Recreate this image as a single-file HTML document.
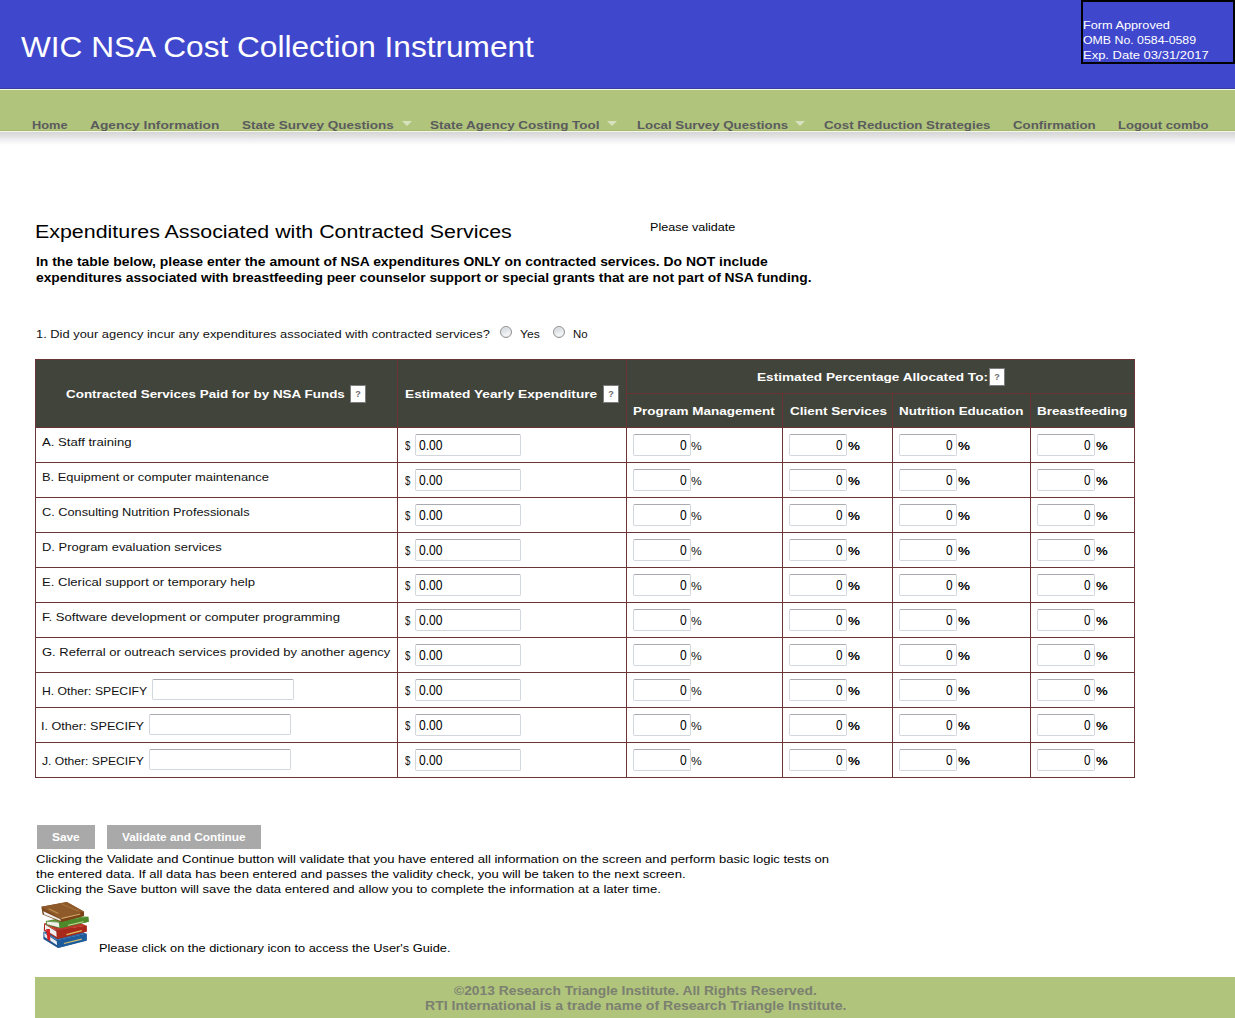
<!DOCTYPE html>
<html><head><meta charset="utf-8"><title>WIC NSA Cost Collection Instrument</title>
<style>
html,body{margin:0;padding:0;background:#fff;}
body{width:1235px;height:1018px;position:relative;overflow:hidden;font-family:"Liberation Sans",sans-serif;}
.t{position:absolute;white-space:nowrap;line-height:1;transform-origin:0 0;}
.inp{position:absolute;box-sizing:border-box;border:1px solid #d2d6dd;border-top-color:#a9abb1;border-radius:2px;background:#fff;}
</style></head><body>
<div style="position:absolute;left:0px;top:0px;width:1235px;height:88px;background:#3f48cc;"></div><div style="position:absolute;left:0px;top:88px;width:1235px;height:1px;background:#3b3e98;"></div><div style="position:absolute;left:0px;top:89px;width:1235px;height:1px;background:#f3f5f0;"></div><div style="position:absolute;left:0px;top:90px;width:1235px;height:40px;background:#b0c47c;"></div><div style="position:absolute;left:0px;top:130px;width:1235px;height:1px;background:#a6b872;"></div><div style="position:absolute;left:0px;top:131px;width:1235px;height:1px;background:#f4f8e4;"></div><div style="position:absolute;left:0px;top:132px;width:1235px;height:13px;background:linear-gradient(#d5d5d9,#e3e3e2 35%,#f1f1f4 65%,#ffffff);"></div><div style="position:absolute;left:1081px;top:0;width:154px;height:64px;box-sizing:border-box;border:2px solid #000"></div><div style="position:absolute;left:402px;top:121px;width:0;height:0;border-left:5px solid transparent;border-right:5px solid transparent;border-top:5px solid #d8e1bd"></div><div style="position:absolute;left:607px;top:121px;width:0;height:0;border-left:5px solid transparent;border-right:5px solid transparent;border-top:5px solid #d8e1bd"></div><div style="position:absolute;left:795px;top:121px;width:0;height:0;border-left:5px solid transparent;border-right:5px solid transparent;border-top:5px solid #d8e1bd"></div><div style="position:absolute;left:35px;top:359px;width:1099px;height:68px;background:#41443b;"></div><div style="position:absolute;left:35px;top:359px;width:1100px;height:1px;background:#6b3434;"></div><div style="position:absolute;left:35px;top:427px;width:1100px;height:1px;background:#6b3434;"></div><div style="position:absolute;left:35px;top:462px;width:1100px;height:1px;background:#6b3434;"></div><div style="position:absolute;left:35px;top:497px;width:1100px;height:1px;background:#6b3434;"></div><div style="position:absolute;left:35px;top:532px;width:1100px;height:1px;background:#6b3434;"></div><div style="position:absolute;left:35px;top:567px;width:1100px;height:1px;background:#6b3434;"></div><div style="position:absolute;left:35px;top:602px;width:1100px;height:1px;background:#6b3434;"></div><div style="position:absolute;left:35px;top:637px;width:1100px;height:1px;background:#6b3434;"></div><div style="position:absolute;left:35px;top:672px;width:1100px;height:1px;background:#6b3434;"></div><div style="position:absolute;left:35px;top:707px;width:1100px;height:1px;background:#6b3434;"></div><div style="position:absolute;left:35px;top:742px;width:1100px;height:1px;background:#6b3434;"></div><div style="position:absolute;left:35px;top:777px;width:1100px;height:1px;background:#6b3434;"></div><div style="position:absolute;left:626px;top:393px;width:508px;height:1px;background:#6b3434;"></div><div style="position:absolute;left:35px;top:359px;width:1px;height:419px;background:#6b3434;"></div><div style="position:absolute;left:397px;top:359px;width:1px;height:419px;background:#6b3434;"></div><div style="position:absolute;left:626px;top:359px;width:1px;height:419px;background:#6b3434;"></div><div style="position:absolute;left:1134px;top:359px;width:1px;height:419px;background:#6b3434;"></div><div style="position:absolute;left:782px;top:393px;width:1px;height:385px;background:#6b3434;"></div><div style="position:absolute;left:892px;top:393px;width:1px;height:385px;background:#6b3434;"></div><div style="position:absolute;left:1030px;top:393px;width:1px;height:385px;background:#6b3434;"></div><div style="position:absolute;left:350px;top:385px;width:16px;height:18px;box-sizing:border-box;background:#fff;border:1px solid #7c7c7c;font:bold 9px 'Liberation Sans',sans-serif;color:#6a6a6a;text-align:center;line-height:16px">?</div><div style="position:absolute;left:603px;top:385px;width:16px;height:18px;box-sizing:border-box;background:#fff;border:1px solid #7c7c7c;font:bold 9px 'Liberation Sans',sans-serif;color:#6a6a6a;text-align:center;line-height:16px">?</div><div style="position:absolute;left:989px;top:368px;width:16px;height:18px;box-sizing:border-box;background:#fff;border:1px solid #7c7c7c;font:bold 9px 'Liberation Sans',sans-serif;color:#6a6a6a;text-align:center;line-height:16px">?</div><div class="inp" style="left:415px;top:434px;width:106px;height:22px"></div><div class="inp" style="left:633px;top:434px;width:58px;height:22px"></div><div class="inp" style="left:789px;top:434px;width:58px;height:22px"></div><div class="inp" style="left:899px;top:434px;width:58px;height:22px"></div><div class="inp" style="left:1037px;top:434px;width:58px;height:22px"></div><div class="inp" style="left:415px;top:469px;width:106px;height:22px"></div><div class="inp" style="left:633px;top:469px;width:58px;height:22px"></div><div class="inp" style="left:789px;top:469px;width:58px;height:22px"></div><div class="inp" style="left:899px;top:469px;width:58px;height:22px"></div><div class="inp" style="left:1037px;top:469px;width:58px;height:22px"></div><div class="inp" style="left:415px;top:504px;width:106px;height:22px"></div><div class="inp" style="left:633px;top:504px;width:58px;height:22px"></div><div class="inp" style="left:789px;top:504px;width:58px;height:22px"></div><div class="inp" style="left:899px;top:504px;width:58px;height:22px"></div><div class="inp" style="left:1037px;top:504px;width:58px;height:22px"></div><div class="inp" style="left:415px;top:539px;width:106px;height:22px"></div><div class="inp" style="left:633px;top:539px;width:58px;height:22px"></div><div class="inp" style="left:789px;top:539px;width:58px;height:22px"></div><div class="inp" style="left:899px;top:539px;width:58px;height:22px"></div><div class="inp" style="left:1037px;top:539px;width:58px;height:22px"></div><div class="inp" style="left:415px;top:574px;width:106px;height:22px"></div><div class="inp" style="left:633px;top:574px;width:58px;height:22px"></div><div class="inp" style="left:789px;top:574px;width:58px;height:22px"></div><div class="inp" style="left:899px;top:574px;width:58px;height:22px"></div><div class="inp" style="left:1037px;top:574px;width:58px;height:22px"></div><div class="inp" style="left:415px;top:609px;width:106px;height:22px"></div><div class="inp" style="left:633px;top:609px;width:58px;height:22px"></div><div class="inp" style="left:789px;top:609px;width:58px;height:22px"></div><div class="inp" style="left:899px;top:609px;width:58px;height:22px"></div><div class="inp" style="left:1037px;top:609px;width:58px;height:22px"></div><div class="inp" style="left:415px;top:644px;width:106px;height:22px"></div><div class="inp" style="left:633px;top:644px;width:58px;height:22px"></div><div class="inp" style="left:789px;top:644px;width:58px;height:22px"></div><div class="inp" style="left:899px;top:644px;width:58px;height:22px"></div><div class="inp" style="left:1037px;top:644px;width:58px;height:22px"></div><div class="inp" style="left:415px;top:679px;width:106px;height:22px"></div><div class="inp" style="left:633px;top:679px;width:58px;height:22px"></div><div class="inp" style="left:789px;top:679px;width:58px;height:22px"></div><div class="inp" style="left:899px;top:679px;width:58px;height:22px"></div><div class="inp" style="left:1037px;top:679px;width:58px;height:22px"></div><div class="inp" style="left:152px;top:679px;width:142px;height:21px"></div><div class="inp" style="left:415px;top:714px;width:106px;height:22px"></div><div class="inp" style="left:633px;top:714px;width:58px;height:22px"></div><div class="inp" style="left:789px;top:714px;width:58px;height:22px"></div><div class="inp" style="left:899px;top:714px;width:58px;height:22px"></div><div class="inp" style="left:1037px;top:714px;width:58px;height:22px"></div><div class="inp" style="left:149px;top:714px;width:142px;height:21px"></div><div class="inp" style="left:415px;top:749px;width:106px;height:22px"></div><div class="inp" style="left:633px;top:749px;width:58px;height:22px"></div><div class="inp" style="left:789px;top:749px;width:58px;height:22px"></div><div class="inp" style="left:899px;top:749px;width:58px;height:22px"></div><div class="inp" style="left:1037px;top:749px;width:58px;height:22px"></div><div class="inp" style="left:149px;top:749px;width:142px;height:21px"></div><div style="position:absolute;left:500px;top:326px;width:12px;height:12px;box-sizing:border-box;border-radius:50%;border:1px solid #8f8f8f;box-shadow:inset 0 0 0 1px #e9e9e9;background:linear-gradient(160deg,#c9d0d8,#f4f6f8 75%)"></div><div style="position:absolute;left:553px;top:326px;width:12px;height:12px;box-sizing:border-box;border-radius:50%;border:1px solid #8f8f8f;box-shadow:inset 0 0 0 1px #e9e9e9;background:linear-gradient(160deg,#c9d0d8,#f4f6f8 75%)"></div><div style="position:absolute;left:37px;top:825px;width:58px;height:24px;background:#a9a9a9;"></div><div style="position:absolute;left:107px;top:825px;width:154px;height:24px;background:#a9a9a9;"></div><div style="position:absolute;left:35px;top:977px;width:1200px;height:41px;background:#b0c47c;"></div>
<svg style="position:absolute;left:30px;top:895px" width="100" height="65" viewBox="0 0 1235 803">
<g stroke="none">
<!-- blue bottom book -->
<polygon points="165,455 335,560 700,480 700,560 345,655 165,545" fill="#1f5590"/>
<polygon points="165,455 520,400 700,480 335,560" fill="#2c66a4"/>
<polygon points="175,470 330,570 335,620 180,520" fill="#e8eef4"/>
<polygon points="335,560 700,480 700,565 345,655" fill="#1f5c9c"/>
<polyline points="420,600 640,545" stroke="#d8c070" stroke-width="14" fill="none"/>
<!-- red book -->
<polygon points="175,350 330,440 700,380 700,450 340,545 170,440" fill="#a82a1e"/>
<polygon points="175,350 520,300 700,380 330,440" fill="#b8382a"/>
<polygon points="185,365 325,450 330,520 185,430" fill="#eeeeee"/>
<polygon points="330,440 700,380 700,450 340,545" fill="#a8281a"/>
<polyline points="450,490 640,440" stroke="#e0c060" stroke-width="14" fill="none"/>
<polygon points="200,420 245,420 250,570 215,550" fill="#d42020"/>
<!-- green book -->
<polygon points="195,320 360,330 720,270 725,330 370,410 200,370" fill="#4a7f2a"/>
<polygon points="195,320 520,255 720,270 360,330" fill="#5b9033"/>
<polygon points="205,330 355,340 365,400 210,360" fill="#f0f0ea"/>
<polygon points="360,330 720,270 725,330 370,410" fill="#4d8a2c"/>
<polyline points="470,375 660,330" stroke="#cfe0a0" stroke-width="12" fill="none"/>
<!-- brown top book -->
<polygon points="140,145 455,88 665,205 668,255 385,335 155,240" fill="#7e4a1c"/>
<polygon points="140,145 455,88 665,205 380,300" fill="#8e5a2a"/>
<polygon points="165,200 375,300 380,320 175,240" fill="#eef0f2"/>
<polygon points="380,300 665,205 668,255 385,335" fill="#7a4216"/>
<polyline points="230,170 350,230" stroke="#c09050" stroke-width="14" fill="none"/>
<polyline points="390,110 600,200" stroke="#b07a40" stroke-width="10" fill="none"/>
<polyline points="390,290 620,235" stroke="#d8b070" stroke-width="14" fill="none"/>
</g>
</svg>

<div class="t" style="left:21.00px;top:32px;font-size:29.6px;color:#fff;transform:scaleX(1.0680);">WIC NSA Cost Collection Instrument</div><div class="t" style="left:1083.40px;top:19px;font-size:11.6px;color:#fff;transform:scaleX(1.0963);">Form Approved</div><div class="t" style="left:1083.40px;top:34px;font-size:11.6px;color:#fff;transform:scaleX(1.0634);">OMB No. 0584-0589</div><div class="t" style="left:1083.40px;top:49px;font-size:11.6px;color:#fff;transform:scaleX(1.1199);">Exp. Date 03/31/2017</div><div class="t" style="left:31.60px;top:119px;font-size:11.6px;color:#5b5b5e;font-weight:bold;transform:scaleX(1.1049);">Home</div><div class="t" style="left:90.40px;top:119px;font-size:11.6px;color:#5b5b5e;font-weight:bold;transform:scaleX(1.1877);">Agency Information</div><div class="t" style="left:242.30px;top:119px;font-size:11.6px;color:#5b5b5e;font-weight:bold;transform:scaleX(1.1665);">State Survey Questions</div><div class="t" style="left:430.20px;top:119px;font-size:11.6px;color:#5b5b5e;font-weight:bold;transform:scaleX(1.1589);">State Agency Costing Tool</div><div class="t" style="left:636.70px;top:119px;font-size:11.6px;color:#5b5b5e;font-weight:bold;transform:scaleX(1.1441);">Local Survey Questions</div><div class="t" style="left:823.70px;top:119px;font-size:11.6px;color:#5b5b5e;font-weight:bold;transform:scaleX(1.1488);">Cost Reduction Strategies</div><div class="t" style="left:1012.70px;top:119px;font-size:11.6px;color:#5b5b5e;font-weight:bold;transform:scaleX(1.1464);">Confirmation</div><div class="t" style="left:1118.40px;top:119px;font-size:11.6px;color:#5b5b5e;font-weight:bold;transform:scaleX(1.1230);">Logout combo</div><div class="t" style="left:34.83px;top:223px;font-size:18.3px;color:#000;transform:scaleX(1.1700);">Expenditures Associated with Contracted Services</div><div class="t" style="left:649.80px;top:221px;font-size:11.6px;color:#000;transform:scaleX(1.0833);">Please validate</div><div class="t" style="left:35.50px;top:255px;font-size:13.1px;color:#000;font-weight:bold;transform:scaleX(1.0612);">In the table below, please enter the amount of NSA expenditures ONLY on contracted services. Do NOT include</div><div class="t" style="left:35.50px;top:271px;font-size:13.1px;color:#000;font-weight:bold;transform:scaleX(1.0539);">expenditures associated with breastfeeding peer counselor support or special grants that are not part of NSA funding.</div><div class="t" style="left:36.00px;top:328px;font-size:11.6px;color:#111;transform:scaleX(1.1107);">1. Did your agency incur any expenditures associated with contracted services?</div><div class="t" style="left:519.80px;top:328px;font-size:11.6px;color:#111;transform:scaleX(1.0462);">Yes</div><div class="t" style="left:573.30px;top:328px;font-size:11.6px;color:#111;transform:scaleX(0.9880);">No</div><div class="t" style="left:66.20px;top:388px;font-size:11.6px;color:#fff;font-weight:bold;transform:scaleX(1.1592);">Contracted Services Paid for by NSA Funds</div><div class="t" style="left:404.50px;top:388px;font-size:11.6px;color:#fff;font-weight:bold;transform:scaleX(1.1805);">Estimated Yearly Expenditure</div><div class="t" style="left:757.00px;top:371px;font-size:11.6px;color:#fff;font-weight:bold;transform:scaleX(1.1756);">Estimated Percentage Allocated To:</div><div class="t" style="left:633.20px;top:405px;font-size:11.6px;color:#fff;font-weight:bold;transform:scaleX(1.1632);">Program Management</div><div class="t" style="left:789.50px;top:405px;font-size:11.6px;color:#fff;font-weight:bold;transform:scaleX(1.1659);">Client Services</div><div class="t" style="left:899.40px;top:405px;font-size:11.6px;color:#fff;font-weight:bold;transform:scaleX(1.1575);">Nutrition Education</div><div class="t" style="left:1037.20px;top:405px;font-size:11.6px;color:#fff;font-weight:bold;transform:scaleX(1.1692);">Breastfeeding</div><div class="t" style="left:42.00px;top:436px;font-size:11.6px;color:#111;transform:scaleX(1.1322);">A. Staff training</div><div class="t" style="left:42.00px;top:471px;font-size:11.6px;color:#111;transform:scaleX(1.1102);">B. Equipment or computer maintenance</div><div class="t" style="left:42.00px;top:506px;font-size:11.6px;color:#111;transform:scaleX(1.0994);">C. Consulting Nutrition Professionals</div><div class="t" style="left:42.00px;top:541px;font-size:11.6px;color:#111;transform:scaleX(1.1154);">D. Program evaluation services</div><div class="t" style="left:42.00px;top:576px;font-size:11.6px;color:#111;transform:scaleX(1.1282);">E. Clerical support or temporary help</div><div class="t" style="left:42.00px;top:611px;font-size:11.6px;color:#111;transform:scaleX(1.1276);">F. Software development or computer programming</div><div class="t" style="left:42.00px;top:646px;font-size:11.6px;color:#111;transform:scaleX(1.1212);">G. Referral or outreach services provided by another agency</div><div class="t" style="left:42.00px;top:685px;font-size:11.6px;color:#111;transform:scaleX(1.0527);">H. Other: SPECIFY</div><div class="t" style="left:40.91px;top:720px;font-size:11.6px;color:#111;transform:scaleX(1.0878);">I. Other: SPECIFY</div><div class="t" style="left:42.00px;top:755px;font-size:11.6px;color:#111;transform:scaleX(1.0456);">J. Other: SPECIFY</div><div class="t" style="left:51.90px;top:832px;font-size:10.8px;color:#fff;font-weight:bold;transform:scaleX(1.0987);">Save</div><div class="t" style="left:122.10px;top:832px;font-size:10.8px;color:#fff;font-weight:bold;transform:scaleX(1.0951);">Validate and Continue</div><div class="t" style="left:35.70px;top:853px;font-size:11.6px;color:#000;transform:scaleX(1.1242);">Clicking the Validate and Continue button will validate that you have entered all information on the screen and perform basic logic tests on</div><div class="t" style="left:35.70px;top:868px;font-size:11.6px;color:#000;transform:scaleX(1.1273);">the entered data. If all data has been entered and passes the validity check, you will be taken to the next screen.</div><div class="t" style="left:35.70px;top:883px;font-size:11.6px;color:#000;transform:scaleX(1.1287);">Clicking the Save button will save the data entered and allow you to complete the information at a later time.</div><div class="t" style="left:99.10px;top:942px;font-size:11.6px;color:#000;transform:scaleX(1.1030);">Please click on the dictionary icon to access the User's Guide.</div><div class="t" style="left:454.00px;top:985px;font-size:12.5px;color:#7b8070;font-weight:bold;transform:scaleX(1.1048);">©2013 Research Triangle Institute. All Rights Reserved.</div><div class="t" style="left:424.90px;top:1000px;font-size:12.5px;color:#7b8070;font-weight:bold;transform:scaleX(1.1235);">RTI International is a trade name of Research Triangle Institute.</div><div class="t" style="left:404.70px;top:440px;font-size:12.5px;color:#111;transform:scaleX(0.7714);">$</div><div class="t" style="left:404.70px;top:475px;font-size:12.5px;color:#111;transform:scaleX(0.7714);">$</div><div class="t" style="left:404.70px;top:510px;font-size:12.5px;color:#111;transform:scaleX(0.7714);">$</div><div class="t" style="left:404.70px;top:545px;font-size:12.5px;color:#111;transform:scaleX(0.7714);">$</div><div class="t" style="left:404.70px;top:580px;font-size:12.5px;color:#111;transform:scaleX(0.7714);">$</div><div class="t" style="left:404.70px;top:615px;font-size:12.5px;color:#111;transform:scaleX(0.7714);">$</div><div class="t" style="left:404.70px;top:650px;font-size:12.5px;color:#111;transform:scaleX(0.7714);">$</div><div class="t" style="left:404.70px;top:685px;font-size:12.5px;color:#111;transform:scaleX(0.7714);">$</div><div class="t" style="left:404.70px;top:720px;font-size:12.5px;color:#111;transform:scaleX(0.7714);">$</div><div class="t" style="left:404.70px;top:755px;font-size:12.5px;color:#111;transform:scaleX(0.7714);">$</div><div class="t" style="left:419.20px;top:438px;font-size:14px;color:#000;transform:scaleX(0.8630);">0.00</div><div class="t" style="left:419.20px;top:473px;font-size:14px;color:#000;transform:scaleX(0.8630);">0.00</div><div class="t" style="left:419.20px;top:508px;font-size:14px;color:#000;transform:scaleX(0.8630);">0.00</div><div class="t" style="left:419.20px;top:543px;font-size:14px;color:#000;transform:scaleX(0.8630);">0.00</div><div class="t" style="left:419.20px;top:578px;font-size:14px;color:#000;transform:scaleX(0.8630);">0.00</div><div class="t" style="left:419.20px;top:613px;font-size:14px;color:#000;transform:scaleX(0.8630);">0.00</div><div class="t" style="left:419.20px;top:648px;font-size:14px;color:#000;transform:scaleX(0.8630);">0.00</div><div class="t" style="left:419.20px;top:683px;font-size:14px;color:#000;transform:scaleX(0.8630);">0.00</div><div class="t" style="left:419.20px;top:718px;font-size:14px;color:#000;transform:scaleX(0.8630);">0.00</div><div class="t" style="left:419.20px;top:753px;font-size:14px;color:#000;transform:scaleX(0.8630);">0.00</div><div class="t" style="left:679.90px;top:438px;font-size:14px;color:#000;transform:scaleX(0.8625);">0</div><div class="t" style="left:679.90px;top:473px;font-size:14px;color:#000;transform:scaleX(0.8625);">0</div><div class="t" style="left:679.90px;top:508px;font-size:14px;color:#000;transform:scaleX(0.8625);">0</div><div class="t" style="left:679.90px;top:543px;font-size:14px;color:#000;transform:scaleX(0.8625);">0</div><div class="t" style="left:679.90px;top:578px;font-size:14px;color:#000;transform:scaleX(0.8625);">0</div><div class="t" style="left:679.90px;top:613px;font-size:14px;color:#000;transform:scaleX(0.8625);">0</div><div class="t" style="left:679.90px;top:648px;font-size:14px;color:#000;transform:scaleX(0.8625);">0</div><div class="t" style="left:679.90px;top:683px;font-size:14px;color:#000;transform:scaleX(0.8625);">0</div><div class="t" style="left:679.90px;top:718px;font-size:14px;color:#000;transform:scaleX(0.8625);">0</div><div class="t" style="left:679.90px;top:753px;font-size:14px;color:#000;transform:scaleX(0.8625);">0</div><div class="t" style="left:836.30px;top:438px;font-size:14px;color:#000;transform:scaleX(0.8375);">0</div><div class="t" style="left:836.30px;top:473px;font-size:14px;color:#000;transform:scaleX(0.8375);">0</div><div class="t" style="left:836.30px;top:508px;font-size:14px;color:#000;transform:scaleX(0.8375);">0</div><div class="t" style="left:836.30px;top:543px;font-size:14px;color:#000;transform:scaleX(0.8375);">0</div><div class="t" style="left:836.30px;top:578px;font-size:14px;color:#000;transform:scaleX(0.8375);">0</div><div class="t" style="left:836.30px;top:613px;font-size:14px;color:#000;transform:scaleX(0.8375);">0</div><div class="t" style="left:836.30px;top:648px;font-size:14px;color:#000;transform:scaleX(0.8375);">0</div><div class="t" style="left:836.30px;top:683px;font-size:14px;color:#000;transform:scaleX(0.8375);">0</div><div class="t" style="left:836.30px;top:718px;font-size:14px;color:#000;transform:scaleX(0.8375);">0</div><div class="t" style="left:836.30px;top:753px;font-size:14px;color:#000;transform:scaleX(0.8375);">0</div><div class="t" style="left:946.00px;top:438px;font-size:14px;color:#000;transform:scaleX(0.8500);">0</div><div class="t" style="left:946.00px;top:473px;font-size:14px;color:#000;transform:scaleX(0.8500);">0</div><div class="t" style="left:946.00px;top:508px;font-size:14px;color:#000;transform:scaleX(0.8500);">0</div><div class="t" style="left:946.00px;top:543px;font-size:14px;color:#000;transform:scaleX(0.8500);">0</div><div class="t" style="left:946.00px;top:578px;font-size:14px;color:#000;transform:scaleX(0.8500);">0</div><div class="t" style="left:946.00px;top:613px;font-size:14px;color:#000;transform:scaleX(0.8500);">0</div><div class="t" style="left:946.00px;top:648px;font-size:14px;color:#000;transform:scaleX(0.8500);">0</div><div class="t" style="left:946.00px;top:683px;font-size:14px;color:#000;transform:scaleX(0.8500);">0</div><div class="t" style="left:946.00px;top:718px;font-size:14px;color:#000;transform:scaleX(0.8500);">0</div><div class="t" style="left:946.00px;top:753px;font-size:14px;color:#000;transform:scaleX(0.8500);">0</div><div class="t" style="left:1084.00px;top:438px;font-size:14px;color:#000;transform:scaleX(0.8375);">0</div><div class="t" style="left:1084.00px;top:473px;font-size:14px;color:#000;transform:scaleX(0.8375);">0</div><div class="t" style="left:1084.00px;top:508px;font-size:14px;color:#000;transform:scaleX(0.8375);">0</div><div class="t" style="left:1084.00px;top:543px;font-size:14px;color:#000;transform:scaleX(0.8375);">0</div><div class="t" style="left:1084.00px;top:578px;font-size:14px;color:#000;transform:scaleX(0.8375);">0</div><div class="t" style="left:1084.00px;top:613px;font-size:14px;color:#000;transform:scaleX(0.8375);">0</div><div class="t" style="left:1084.00px;top:648px;font-size:14px;color:#000;transform:scaleX(0.8375);">0</div><div class="t" style="left:1084.00px;top:683px;font-size:14px;color:#000;transform:scaleX(0.8375);">0</div><div class="t" style="left:1084.00px;top:718px;font-size:14px;color:#000;transform:scaleX(0.8375);">0</div><div class="t" style="left:1084.00px;top:753px;font-size:14px;color:#000;transform:scaleX(0.8375);">0</div><div class="t" style="left:691.20px;top:441px;font-size:11.8px;color:#111;transform:scaleX(1.0182);">%</div><div class="t" style="left:691.20px;top:476px;font-size:11.8px;color:#111;transform:scaleX(1.0182);">%</div><div class="t" style="left:691.20px;top:511px;font-size:11.8px;color:#111;transform:scaleX(1.0182);">%</div><div class="t" style="left:691.20px;top:546px;font-size:11.8px;color:#111;transform:scaleX(1.0182);">%</div><div class="t" style="left:691.20px;top:581px;font-size:11.8px;color:#111;transform:scaleX(1.0182);">%</div><div class="t" style="left:691.20px;top:616px;font-size:11.8px;color:#111;transform:scaleX(1.0182);">%</div><div class="t" style="left:691.20px;top:651px;font-size:11.8px;color:#111;transform:scaleX(1.0182);">%</div><div class="t" style="left:691.20px;top:686px;font-size:11.8px;color:#111;transform:scaleX(1.0182);">%</div><div class="t" style="left:691.20px;top:721px;font-size:11.8px;color:#111;transform:scaleX(1.0182);">%</div><div class="t" style="left:691.20px;top:756px;font-size:11.8px;color:#111;transform:scaleX(1.0182);">%</div><div class="t" style="left:847.80px;top:441px;font-size:11.8px;color:#000;font-weight:bold;transform:scaleX(1.1455);">%</div><div class="t" style="left:847.80px;top:476px;font-size:11.8px;color:#000;font-weight:bold;transform:scaleX(1.1455);">%</div><div class="t" style="left:847.80px;top:511px;font-size:11.8px;color:#000;font-weight:bold;transform:scaleX(1.1455);">%</div><div class="t" style="left:847.80px;top:546px;font-size:11.8px;color:#000;font-weight:bold;transform:scaleX(1.1455);">%</div><div class="t" style="left:847.80px;top:581px;font-size:11.8px;color:#000;font-weight:bold;transform:scaleX(1.1455);">%</div><div class="t" style="left:847.80px;top:616px;font-size:11.8px;color:#000;font-weight:bold;transform:scaleX(1.1455);">%</div><div class="t" style="left:847.80px;top:651px;font-size:11.8px;color:#000;font-weight:bold;transform:scaleX(1.1455);">%</div><div class="t" style="left:847.80px;top:686px;font-size:11.8px;color:#000;font-weight:bold;transform:scaleX(1.1455);">%</div><div class="t" style="left:847.80px;top:721px;font-size:11.8px;color:#000;font-weight:bold;transform:scaleX(1.1455);">%</div><div class="t" style="left:847.80px;top:756px;font-size:11.8px;color:#000;font-weight:bold;transform:scaleX(1.1455);">%</div><div class="t" style="left:957.70px;top:441px;font-size:11.8px;color:#000;font-weight:bold;transform:scaleX(1.1455);">%</div><div class="t" style="left:957.70px;top:476px;font-size:11.8px;color:#000;font-weight:bold;transform:scaleX(1.1455);">%</div><div class="t" style="left:957.70px;top:511px;font-size:11.8px;color:#000;font-weight:bold;transform:scaleX(1.1455);">%</div><div class="t" style="left:957.70px;top:546px;font-size:11.8px;color:#000;font-weight:bold;transform:scaleX(1.1455);">%</div><div class="t" style="left:957.70px;top:581px;font-size:11.8px;color:#000;font-weight:bold;transform:scaleX(1.1455);">%</div><div class="t" style="left:957.70px;top:616px;font-size:11.8px;color:#000;font-weight:bold;transform:scaleX(1.1455);">%</div><div class="t" style="left:957.70px;top:651px;font-size:11.8px;color:#000;font-weight:bold;transform:scaleX(1.1455);">%</div><div class="t" style="left:957.70px;top:686px;font-size:11.8px;color:#000;font-weight:bold;transform:scaleX(1.1455);">%</div><div class="t" style="left:957.70px;top:721px;font-size:11.8px;color:#000;font-weight:bold;transform:scaleX(1.1455);">%</div><div class="t" style="left:957.70px;top:756px;font-size:11.8px;color:#000;font-weight:bold;transform:scaleX(1.1455);">%</div><div class="t" style="left:1095.90px;top:441px;font-size:11.8px;color:#000;font-weight:bold;transform:scaleX(1.1182);">%</div><div class="t" style="left:1095.90px;top:476px;font-size:11.8px;color:#000;font-weight:bold;transform:scaleX(1.1182);">%</div><div class="t" style="left:1095.90px;top:511px;font-size:11.8px;color:#000;font-weight:bold;transform:scaleX(1.1182);">%</div><div class="t" style="left:1095.90px;top:546px;font-size:11.8px;color:#000;font-weight:bold;transform:scaleX(1.1182);">%</div><div class="t" style="left:1095.90px;top:581px;font-size:11.8px;color:#000;font-weight:bold;transform:scaleX(1.1182);">%</div><div class="t" style="left:1095.90px;top:616px;font-size:11.8px;color:#000;font-weight:bold;transform:scaleX(1.1182);">%</div><div class="t" style="left:1095.90px;top:651px;font-size:11.8px;color:#000;font-weight:bold;transform:scaleX(1.1182);">%</div><div class="t" style="left:1095.90px;top:686px;font-size:11.8px;color:#000;font-weight:bold;transform:scaleX(1.1182);">%</div><div class="t" style="left:1095.90px;top:721px;font-size:11.8px;color:#000;font-weight:bold;transform:scaleX(1.1182);">%</div><div class="t" style="left:1095.90px;top:756px;font-size:11.8px;color:#000;font-weight:bold;transform:scaleX(1.1182);">%</div>
</body></html>
